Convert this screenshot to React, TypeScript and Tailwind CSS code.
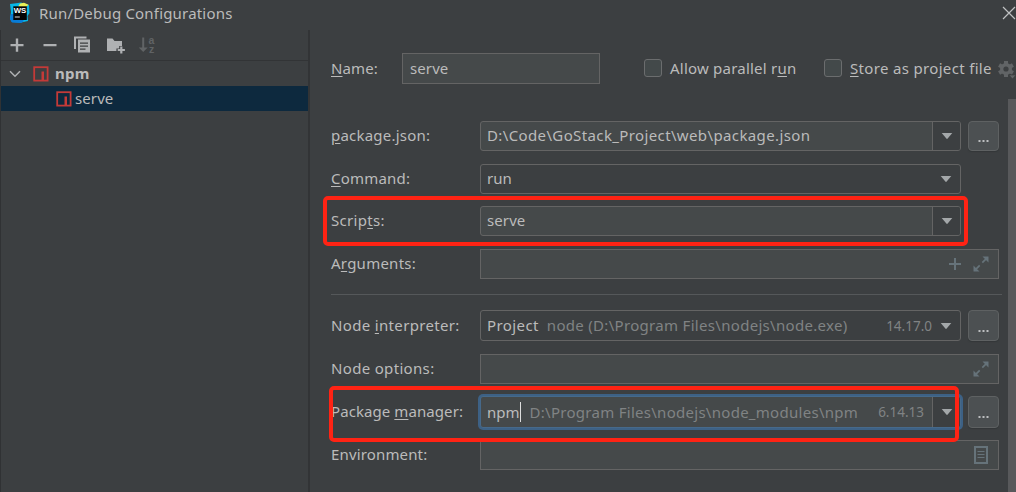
import type { ReactNode } from "react";

const BORDER = "border-[#646464]";

function NpmIcon() {
  return (
    <svg className="block shrink-0" width="16" height="16" viewBox="0 0 16 16">
      <rect x="1.200" y="1.200" width="13.400" height="13.400" fill="none" stroke="#c43a38" strokeWidth="1.800" />
      <rect x="8.500" y="5.500" width="2.500" height="9" fill="#c43a38" />
    </svg>
  );
}

function Logo() {
  return (
    <svg className="block shrink-0" width="22" height="22" viewBox="0 0 22 22">
      <path d="M1 2 9 1l3-.5 8 2.500.5 8-2 3 .5 5-7 1.500-9-.5L1 17l1-7z" fill="#07b8e8" />
      <path d="M2 12h5l8 7-3 2-9-.5L1 17z" fill="#087cd8" />
      <path d="M11 1.500 15 .8l4.500 2L17 5H9z" fill="#e9ef55" />
      <rect x="4.300" y="4.300" width="13.500" height="13.700" fill="#050505" />
      <text x="4.800" y="11" fill="#fff" fontSize="7.800" fontWeight="700" letterSpacing="-.2" fontFamily="Liberation Sans, sans-serif">WS</text>
      <rect x="5.800" y="14.500" width="5" height="1" fill="#ddd" />
    </svg>
  );
}

function Arrow() {
  return (
    <svg className="block shrink-0" width="12" height="8" viewBox="0 0 12 8">
      <path d="M.7 1h10.600L6 7.200z" fill="#a3a7a9" />
    </svg>
  );
}

function ExpandIcon() {
  return (
    <svg className="block shrink-0" width="16" height="16" viewBox="0 0 16 16">
      <path d="M9.500.5h6v6zM.5 9.500l6 6h-6z" fill="#66737a" />
      <path d="m9.300 6.700 4-4M2.700 13.300l4-4" stroke="#66737a" strokeWidth="1.700" />
    </svg>
  );
}

function Row({ label, gap, height, children }: { label: ReactNode; gap: string; height: string; children: ReactNode }) {
  return (
    <div className={`flex items-center ${gap} ${height}`}>
      <div className="w-[149px] shrink-0 whitespace-nowrap pb-[2px]">{label}</div>
      {children}
    </div>
  );
}

function Combo({ editable = false, focused = false, children, version }: { editable?: boolean; focused?: boolean; children: ReactNode; version?: string }) {
  return (
    <div
      className={`flex h-full w-[481px] shrink-0 overflow-hidden rounded-[3px] border ${
        focused ? "border-[#46698a] shadow-[0_0_0_2px_#3d6185]" : BORDER
      } ${editable ? "bg-[#45494a]" : "bg-[#3c3f41]"}`}
    >
      <div className={`flex min-w-0 flex-1 items-center whitespace-pre pl-[6px] ${focused ? "" : "pb-[2px]"}`}>{children}</div>
      {version && <div className={`flex items-center text-[13.5px] text-[#808384] ${editable ? "pr-2" : "pr-0"}`}>{version}</div>}
      <div className={`flex w-[28px] items-center justify-center ${editable ? "border-l border-[#646464] bg-[#3c3f41]" : ""}`}>
        <Arrow />
      </div>
    </div>
  );
}

function Browse() {
  return (
    <button className="ml-[7px] flex h-full w-[31px] shrink-0 items-center justify-center rounded-[4px] border border-[#5e6162] bg-[#4c5052] pt-1 shadow-[0_1px_1px_#343739]">
      <svg width="11" height="10" viewBox="0 0 11 10">
        <path d="M.5 7h2v2h-2zM4.500 7h2v2h-2zM8.500 7h2v2h-2z" fill="#bbbdbf" />
      </svg>
    </button>
  );
}

function TextBox({ children }: { children?: ReactNode }) {
  return <div className="flex h-full w-[519px] shrink-0 items-center justify-end gap-[11px] border border-[#646464] bg-[#45494a] pr-[9px]">{children}</div>;
}

function Check() {
  return <div className="size-[18px] shrink-0 rounded-[3px] border border-[#6b6d6e] bg-[#43494a]" />;
}

function U({ children }: { children: ReactNode }) {
  return <span className="underline decoration-1 underline-offset-[2px]">{children}</span>;
}

export default function App() {
  return (
    <div className="relative flex h-[492px] w-[1016px] flex-col overflow-hidden bg-[#3c3f41] font-['Noto_Sans',sans-serif] text-[15px] leading-5 text-[#bbbbbb]">
      <header className="flex h-[30px] shrink-0 items-center justify-between pl-[9px]">
        <div className="flex items-center gap-[8px] pb-[4px]">
          <Logo />
          <span className="tracking-[0.19px]">Run/Debug Configurations</span>
        </div>
        <svg className="-mt-1" width="14" height="14" viewBox="0 0 14 14">
          <path d="m1 1 12 12M13 1 1 13" stroke="#bfc1c2" strokeWidth="1.200" />
        </svg>
      </header>
      <div className="flex min-h-0 flex-1">
        <aside className="w-[310px] shrink-0 border-l border-r-2 border-l-[#303234] border-r-[#323436]">
          <div className="h-[31px] border-b border-[#323436]">
            <svg width="160" height="30" viewBox="1 30 160 30">
              <g fill="#afb1b3">
                <path d="M10.500 44h5.300v-5.500h2.400V44h5.300v2.300h-5.300v5.500h-2.400v-5.500h-5.300zM43.500 44h13v2.300h-13z" />
                <path d="M74 36.500h12.500v2H76V49h-2z" />
                <path fillRule="evenodd" d="M78 39.500h12v13H78zM80 42.500v1.200h8v-1.200zm0 3v1.200h8v-1.200zm0 3v1.200h5.500v-1.200z" />
                <path d="M107 38.500h5.500l2 2.500h7.500v5h-2.800v2.500h-2.800V51H107z" />
                <path d="M120.200 46.500h2.200V49h2.500v2h-2.500v2.500h-2.200V51h-2.500v-2h2.500z" />
              </g>
              <path d="M142.200 37.500h2v10h3.500l-4.500 4.500-4.500-4.500h3.500z" fill="#606365" />
              <g fill="#606365" fontFamily="Liberation Sans, sans-serif" fontSize="10.500" fontWeight="700">
                <text x="148.500" y="43.500">a</text>
                <text x="149" y="52.500">z</text>
              </g>
            </svg>
          </div>
          <div className="flex h-[25px] items-center pl-[8px] font-bold">
            <svg width="12" height="8" viewBox="0 0 12 8">
              <path d="m1 1.200 5 5 5-5" fill="none" stroke="#afb1b3" strokeWidth="1.500" />
            </svg>
            <div className="ml-[12px] flex items-center gap-[6px]">
              <NpmIcon />
              <span className="pb-[2px] tracking-[0.2px]">npm</span>
            </div>
          </div>
          <div className="flex h-[25px] items-center gap-[3px] bg-[#0d293e] pl-[55px]">
            <NpmIcon />
            <span className="pb-[2px] tracking-[0.1px]">serve</span>
          </div>
        </aside>
        <main className="w-[698px] shrink-0 pl-[21px]">
          <div className="mt-[23px] flex h-[31px] items-center whitespace-nowrap">
            <div className="w-[71px] pb-[2px] tracking-[0.1px]"><U>N</U>ame:</div>
            <div className="flex h-[31px] w-[198px] items-center border border-[#646464] bg-[#45494a] pb-[2px] pl-[7px] tracking-[0.1px]">serve</div>
            <div className="-mt-px ml-[44px] flex w-[180px] items-center gap-[8px]">
              <Check />
              <span className="tracking-[0.22px]">Allow parallel r<U>u</U>n</span>
            </div>
            <div className="-mt-px flex items-center gap-[8px]">
              <Check />
              <span className="tracking-[0.33px]"><U>S</U>tore as project file</span>
            </div>
          </div>
          <Row gap="mt-[37px]" height="h-[30px]" label={<span className="tracking-[0.22px]"><U>p</U>ackage.json:</span>}>
            <Combo editable><span className="tracking-[0.375px]">D:\Code\GoStack_Project\web\package.json</span></Combo>
            <Browse />
          </Row>
          <Row gap="mt-[13px]" height="h-[30px]" label={<span className="tracking-[0.22px]"><U>C</U>ommand:</span>}>
            <Combo>run</Combo>
          </Row>
          <Row gap="mt-[12px]" height="h-[30px]" label={<span className="tracking-[0.3px]">Scrip<U>t</U>s:</span>}>
            <Combo editable><span className="tracking-[0.1px]">serve</span></Combo>
          </Row>
          <Row gap="mt-[13px]" height="h-[30px]" label={<span className="tracking-[0.25px]">A<U>r</U>guments:</span>}>
            <TextBox>
              <svg width="14" height="14" viewBox="0 0 14 14"><path d="M7 1v12M1 7h12" stroke="#66737a" strokeWidth="2" /></svg>
              <ExpandIcon />
            </TextBox>
          </Row>
          <div className="mt-[15px] h-px w-[671px] bg-[#55585a]" />
          <Row gap="mt-[15px]" height="h-[31px]" label={<span className="tracking-[0.34px]">Node <U>i</U>nterpreter:</span>}>
            <Combo version="14.17.0">
              <span className="tracking-[0.4px]">Project</span>
              <span className="ml-[8px] tracking-[0.31px] text-[#808384]">node (D:\Program Files\nodejs\node.exe)</span>
            </Combo>
            <Browse />
          </Row>
          <Row gap="mt-[13px]" height="h-[30px]" label={<span className="tracking-[0.33px]">Node options:</span>}>
            <TextBox><ExpandIcon /></TextBox>
          </Row>
          <Row gap="mt-[12px]" height="h-[32px]" label={<span className="tracking-[0.08px]">Package <U>m</U>anager:</span>}>
            <Combo editable focused version="6.14.13">
              <span>npm</span>
              <span className="h-[20px] w-px bg-[#dddddd]" />
              <span className="ml-[9px] tracking-[0.28px] text-[#808384]">D:\Program Files\nodejs\node_modules\npm</span>
            </Combo>
            <Browse />
          </Row>
          <Row gap="mt-[12px]" height="h-[30px]" label={<span className="tracking-[0.15px]">Environment:</span>}>
            <TextBox>
              <svg width="16" height="18" viewBox="0 0 16 18">
                <path d="M2 1h12v16H2z" fill="none" stroke="#66737a" strokeWidth="2" />
                <path d="M4.500 5.500h7M4.500 8.500h7M4.500 11.500h7" stroke="#66737a" strokeWidth="1.200" />
              </svg>
            </TextBox>
          </Row>
        </main>
        <div className="mt-[69px] w-[8px] shrink-0 bg-[#58595b]" />
      </div>
      <svg className="absolute left-[998px] top-[61px]" width="18" height="18" viewBox="0 0 18 18">
        <path d="M8 0v16M1.070 4l13.860 8M14.930 4 1.070 12" stroke="#616466" strokeWidth="4" />
        <circle cx="8" cy="8" r="4.300" fill="none" stroke="#616466" strokeWidth="3.400" />
        <circle cx="8" cy="8" r="2.600" fill="#3c3f41" />
        <path d="M11 14h7l-3.500 4z" fill="#616466" stroke="#3c3f41" strokeWidth=".7" />
      </svg>
      <div className="pointer-events-none absolute left-[323px] top-[196px] h-[50px] w-[645px] rounded-[5px] border-4 border-[#ff2314]" />
      <div className="pointer-events-none absolute left-[329px] top-[386px] h-[56px] w-[630px] rounded-[5px] border-4 border-[#ff2314]" />
    </div>
  );
}
